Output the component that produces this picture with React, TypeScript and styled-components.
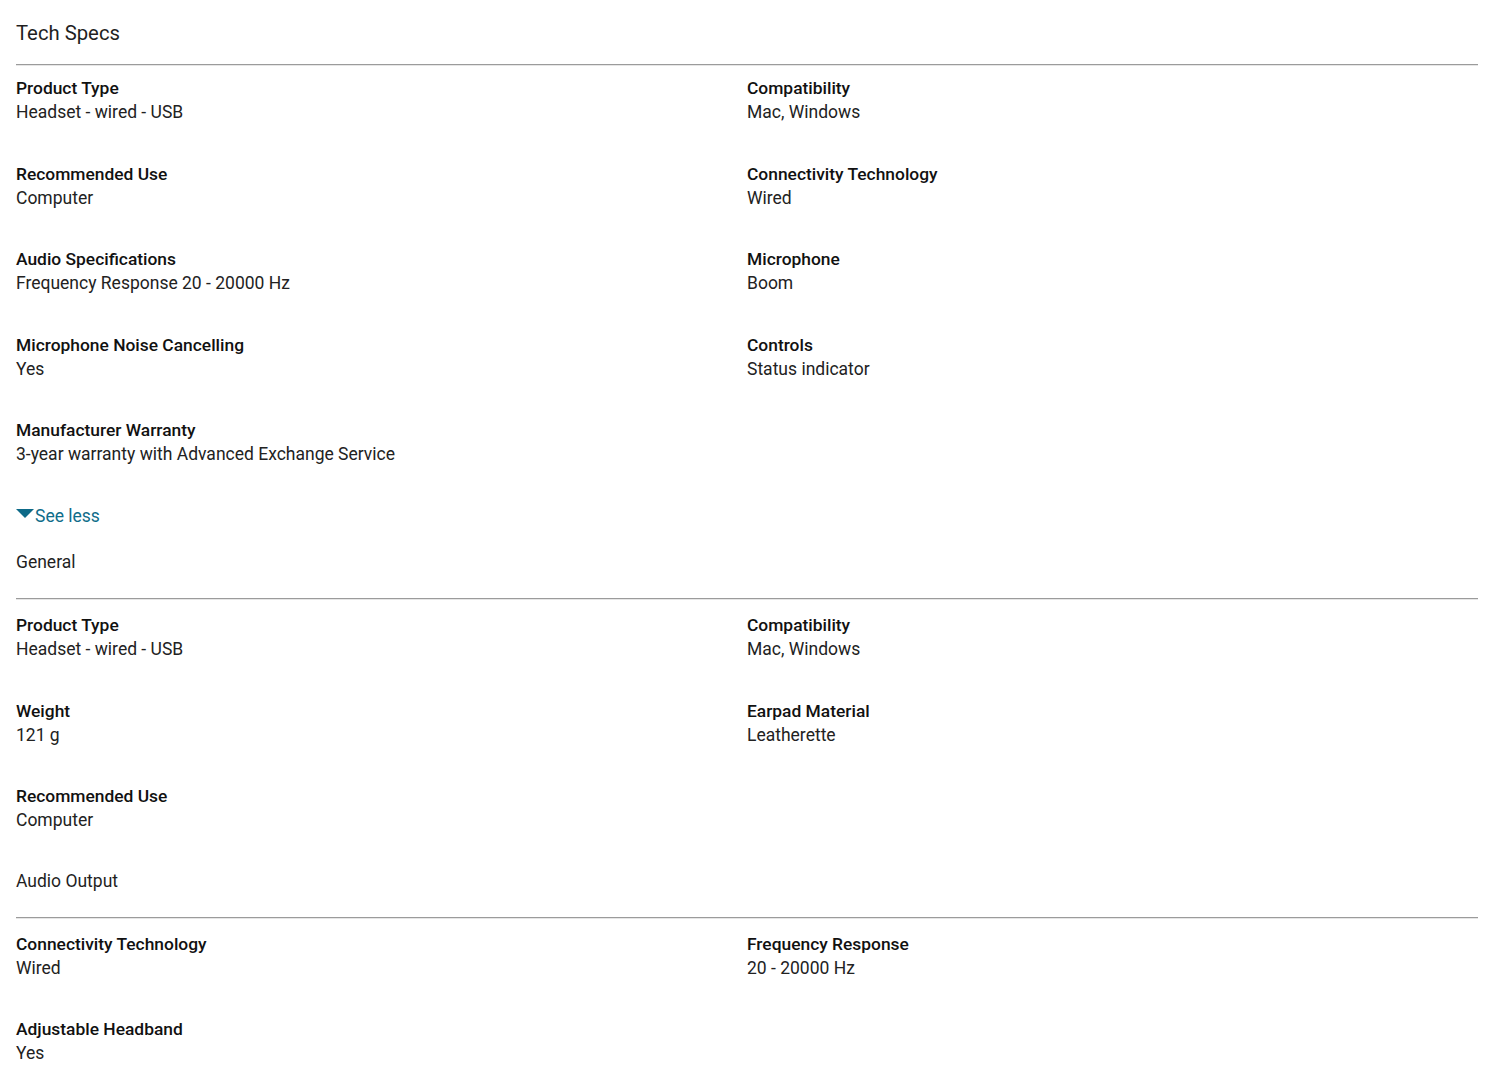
import React from 'react';
import styled, { createGlobalStyle } from 'styled-components';

const GlobalStyle = createGlobalStyle`
  html, body {
    margin: 0;
    padding: 0;
    background: #ffffff;
  }
  body {
    font-family: Roboto, "Liberation Sans", Arial, sans-serif;
    color: #1a1a1a;
  }
`;

type Spec = { label: string; value: string };

const techSpecs: Spec[] = [
  { label: 'Product Type', value: 'Headset - wired - USB' },
  { label: 'Compatibility', value: 'Mac, Windows' },
  { label: 'Recommended Use', value: 'Computer' },
  { label: 'Connectivity Technology', value: 'Wired' },
  { label: 'Audio Specifications', value: 'Frequency Response 20 - 20000 Hz' },
  { label: 'Microphone', value: 'Boom' },
  { label: 'Microphone Noise Cancelling', value: 'Yes' },
  { label: 'Controls', value: 'Status indicator' },
  { label: 'Manufacturer Warranty', value: '3-year warranty with Advanced Exchange Service' },
];

const general: Spec[] = [
  { label: 'Product Type', value: 'Headset - wired - USB' },
  { label: 'Compatibility', value: 'Mac, Windows' },
  { label: 'Weight', value: '121 g' },
  { label: 'Earpad Material', value: 'Leatherette' },
  { label: 'Recommended Use', value: 'Computer' },
];

const audioOutput: Spec[] = [
  { label: 'Connectivity Technology', value: 'Wired' },
  { label: 'Frequency Response', value: '20 - 20000 Hz' },
  { label: 'Adjustable Headband', value: 'Yes' },
];

const Page = styled.div`
  padding: 19px 24px 20px 16px;
`;

const Title = styled.h2<{ $main?: boolean }>`
  margin: 0 0 ${(p) => (p.$main ? '17px' : '24px')};
  font-size: ${(p) => (p.$main ? '20.3px' : '17.5px')};
  line-height: ${(p) => (p.$main ? '28px' : '24px')};
  font-weight: 400;
  color: #1f1f1f;
`;

const Divider = styled.hr`
  margin: 0;
  height: 0;
  border: none;
  border-top: 1px solid #9b9b9b;
  border-bottom: 1px solid #e6e6e6;
`;

const Grid = styled.dl<{ $main?: boolean }>`
  display: grid;
  grid-template-columns: 1fr 1fr;
  row-gap: 37.5px;
  margin: ${(p) => (p.$main ? '10px' : '13px')} 0 0;
  padding-bottom: ${(p) => (p.$main ? '38px' : '36.5px')};
`;

const Item = styled.div`
  display: flex;
  flex-direction: column;
`;

const Label = styled.dt`
  font-size: 17.4px;
  line-height: 24px;
  font-weight: 500;
  color: #111111;
`;

const Value = styled.dd`
  margin: 0;
  font-size: 17.5px;
  line-height: 24px;
  color: #222222;
`;

const SeeLess = styled.button`
  display: flex;
  align-items: center;
  gap: 1px;
  margin: 0 0 22px;
  padding: 0;
  border: none;
  background: none;
  font-family: inherit;
  font-size: 17.5px;
  line-height: 24px;
  color: #0f6d8a;
  cursor: pointer;
`;

const Caret = styled.span`
  width: 0;
  height: 0;
  border-left: 9px solid transparent;
  border-right: 9px solid transparent;
  border-top: 9px solid #0d6a88;
  margin-top: -6px;
`;

const SpecGrid = ({ specs, main }: { specs: Spec[]; main?: boolean }) => (
  <Grid $main={main}>
    {specs.map((s, i) => (
      <Item key={i}>
        <Label>{s.label}</Label>
        <Value>{s.value}</Value>
      </Item>
    ))}
  </Grid>
);

export default function App() {
  return (
    <Page>
      <GlobalStyle />
      <Title $main>Tech Specs</Title>
      <Divider />
      <SpecGrid specs={techSpecs} main />
      <SeeLess>
        <Caret />
        See less
      </SeeLess>

      <Title>General</Title>
      <Divider />
      <SpecGrid specs={general} />

      <Title>Audio Output</Title>
      <Divider />
      <SpecGrid specs={audioOutput} />
    </Page>
  );
}
